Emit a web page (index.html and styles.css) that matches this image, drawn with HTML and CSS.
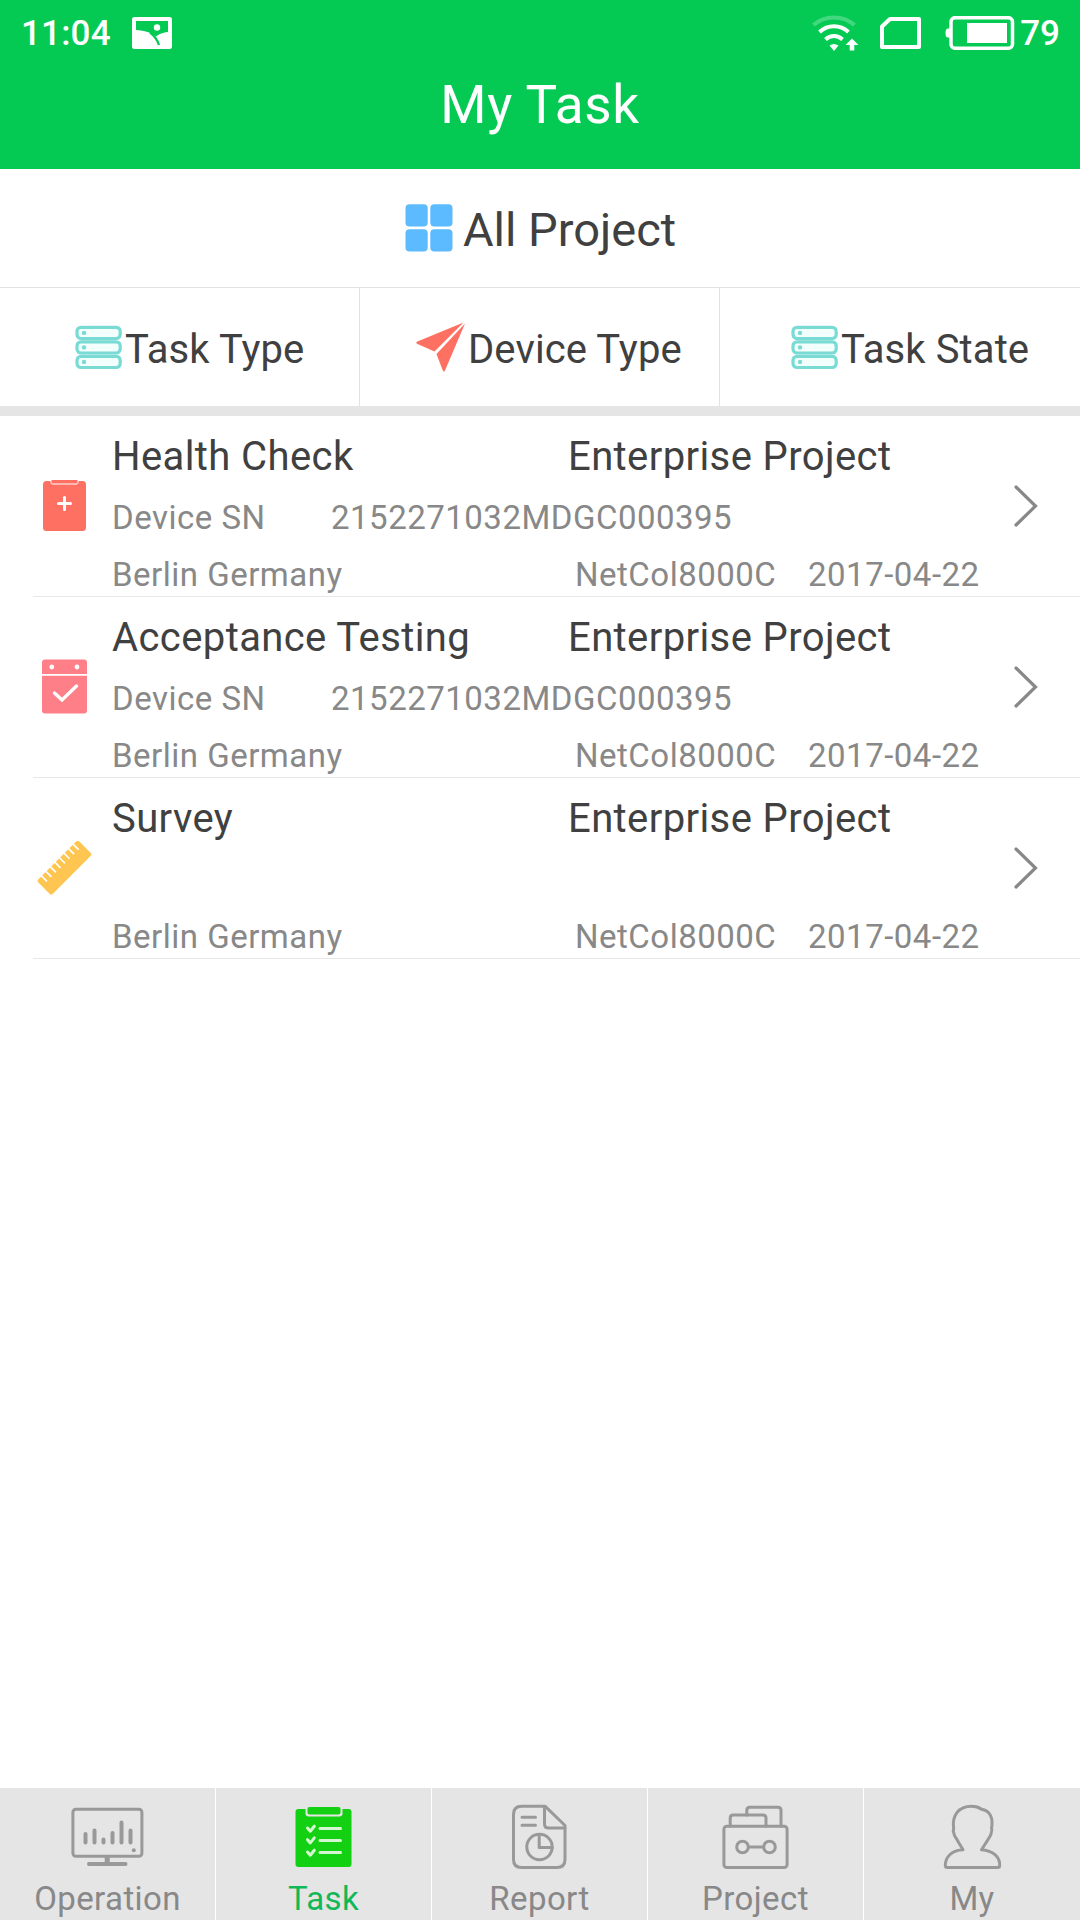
FILE: index.html
```html
<!DOCTYPE html>
<html lang="en">
<head>
  <meta charset="UTF-8">
  <meta name="viewport" content="width=device-width, initial-scale=1.0">
  <title>My Task</title>
  <link rel="stylesheet" href="styles.css">
</head>
<body>
  <header>
    <div class="status-bar">
      <span class="clock">11:04</span>
      <svg class="picture" width="40" height="32" viewBox="0 0 40 32">
        <rect width="40" height="32" rx="2.500" fill="#fff"/>
        <path d="M4 4h32v11c-5 .5-9 1.800-12 4.500C19 15.500 13 13.500 4 13z" fill="#04ca54"/>
        <path d="M18 15.500C22 18.500 25.500 23 27 28" fill="none" stroke="#04ca54" stroke-width="2.200"/>
        <circle cx="25" cy="10.500" r="3.200" fill="#fff"/>
      </svg>
      <div class="status-right">
        <svg width="48" height="40" viewBox="0 0 48 40">
          <g fill="none" stroke="#fff" stroke-width="4">
            <path d="M1.500 12C13 2 31 2 42.500 12" stroke-width="4" opacity="0.25"/>
            <path d="M7.500 19C16 11.300 28 11.300 36.500 19"/>
            <path d="M13.500 26.500C18.500 21.800 25.500 21.800 30.500 26.500"/>
          </g>
          <path d="M17.500 32.500Q22 29.500 26.500 32.500L22 38z" fill="#fff"/>
          <path d="M40 25.500L46.500 32H42.300V37.500H37.700V32H33.500z" fill="#fff"/>
        </svg>
        <svg class="sim" width="42" height="32" viewBox="0 0 42 32">
          <path d="M10 2H39V30H2V9.500z" fill="none" stroke="#fff" stroke-width="4" stroke-linejoin="round"/>
        </svg>
        <svg class="battery" width="70" height="34" viewBox="0 0 70 34">
          <path d="M5 12.500H3Q.5 12.500 .5 17T3 21.500H5z" fill="#fff"/>
          <rect x="6" y="1.700" width="61.500" height="30.600" rx="4" fill="none" stroke="#fff" stroke-width="3.500"/>
          <rect x="22" y="7" width="40" height="20" fill="#fff"/>
        </svg>
        <span class="percent">79</span>
      </div>
    </div>
    <h1>My Task</h1>
  </header>

  <main>
    <div class="all-project">
      <svg width="48" height="48" viewBox="0 0 48 48" fill="#5cbaff">
        <rect x="0.500" y="0.300" width="22.200" height="22.200" rx="4"/>
        <rect x="25.300" y="0.300" width="22.200" height="22.200" rx="4"/>
        <rect x="0.500" y="25.300" width="22.200" height="22.200" rx="4"/>
        <rect x="25.300" y="25.300" width="22.200" height="22.200" rx="4"/>
      </svg>
      <span>All Project</span>
    </div>

    <div class="filters">
      <div class="filter task-type">
        <svg width="50" height="50" viewBox="0 0 50 50">
          <g fill="#f2fffd" stroke="#7adad4" stroke-width="3.200">
            <rect x="3" y="5.300" width="43.200" height="11.200" rx="4"/>
            <rect x="3" y="19.800" width="43.200" height="11.200" rx="4"/>
            <rect x="3" y="34.300" width="43.200" height="11.200" rx="4"/>
          </g>
          <g fill="#7adad4">
            <circle cx="10" cy="10.900" r="2.200"/>
            <circle cx="10" cy="25.400" r="2.200"/>
            <circle cx="10" cy="39.900" r="2.200"/>
          </g>
        </svg>
        <span>Task Type</span>
      </div>
      <div class="filter device-type">
        <svg width="50" height="50" viewBox="0 0 50 50" fill="#fd7062">
          <path d="M48.500 0.500L1.800 19.800Q.5 20.800 2 21.700L19.500 29.500z"/>
          <path d="M50 1.500L21.500 32L27.800 48.500Q29 50.500 30 48.500z"/>
        </svg>
        <span>Device Type</span>
      </div>
      <div class="filter task-state">
        <svg width="50" height="50" viewBox="0 0 50 50">
          <g fill="#f2fffd" stroke="#7adad4" stroke-width="3.200">
            <rect x="3" y="5.300" width="43.200" height="11.200" rx="4"/>
            <rect x="3" y="19.800" width="43.200" height="11.200" rx="4"/>
            <rect x="3" y="34.300" width="43.200" height="11.200" rx="4"/>
          </g>
          <g fill="#7adad4">
            <circle cx="10" cy="10.900" r="2.200"/>
            <circle cx="10" cy="25.400" r="2.200"/>
            <circle cx="10" cy="39.900" r="2.200"/>
          </g>
        </svg>
        <span>Task State</span>
      </div>
    </div>

    <ul class="tasks">
      <li>
        <svg class="task-icon" width="58" height="58" viewBox="0 0 58 58">
          <rect x="7" y="4" width="43" height="50" rx="3.500" fill="#fd7062"/>
          <path d="M15 3v2.500q0 1.500 1.500 1.500h24q1.500 0 1.500-1.500V3" fill="#fd7062" stroke="#fff" stroke-width="1"/>
          <path d="M28.500 20.500v12M22.500 26.500h12" stroke="#fff" stroke-width="3" stroke-linecap="round"/>
        </svg>
        <div class="info">
          <div class="line title"><span class="name">Health Check</span><span>Enterprise Project</span></div>
          <div class="line"><span class="label">Device SN</span><span>2152271032MDGC000395</span></div>
          <div class="line"><span class="place">Berlin Germany</span><span class="model">NetCol8000C</span><span>2017-04-22</span></div>
        </div>
        <svg class="arrow" width="26" height="44" viewBox="0 0 26 44">
          <path d="M3 3L22.500 22L3 41" fill="none" stroke="#888" stroke-width="3.200" stroke-linecap="round"/>
        </svg>
      </li>
      <li>
        <svg class="task-icon" width="58" height="58" viewBox="0 0 58 58">
          <rect x="6" y="1.500" width="45" height="54" rx="3" fill="#ff7f89"/>
          <path d="M6 16.800h45" stroke="#fff" stroke-width="1.800"/>
          <circle cx="15.800" cy="9" r="2.400" fill="#fff"/>
          <circle cx="41" cy="9" r="2.400" fill="#fff"/>
          <path d="M18.500 35L26 42L40.500 28" fill="none" stroke="#fff" stroke-width="3.400" stroke-linecap="round"/>
        </svg>
        <div class="info">
          <div class="line title"><span class="name">Acceptance Testing</span><span>Enterprise Project</span></div>
          <div class="line"><span class="label">Device SN</span><span>2152271032MDGC000395</span></div>
          <div class="line"><span class="place">Berlin Germany</span><span class="model">NetCol8000C</span><span>2017-04-22</span></div>
        </div>
        <svg class="arrow" width="26" height="44" viewBox="0 0 26 44">
          <path d="M3 3L22.500 22L3 41" fill="none" stroke="#888" stroke-width="3.200" stroke-linecap="round"/>
        </svg>
      </li>
      <li>
        <svg class="task-icon" width="58" height="58" viewBox="0 0 58 58">
          <g transform="rotate(-45 29 28.500)">
            <rect x="-0.500" y="18" width="58" height="20.500" rx="2" fill="#fec650"/>
            <path d="M6.500 17v8.500M12.800 17v8.500M19.200 17v8.500M25.600 17v8.500M32 17v8.500M38.400 17v8.500M44.800 17v8.500M51.200 17v8.500" stroke="#fff" stroke-width="1.700"/>
          </g>
        </svg>
        <div class="info">
          <div class="line title"><span class="name">Survey</span><span>Enterprise Project</span></div>
          <div class="line"></div>
          <div class="line"><span class="place">Berlin Germany</span><span class="model">NetCol8000C</span><span>2017-04-22</span></div>
        </div>
        <svg class="arrow" width="26" height="44" viewBox="0 0 26 44">
          <path d="M3 3L22.500 22L3 41" fill="none" stroke="#888" stroke-width="3.200" stroke-linecap="round"/>
        </svg>
      </li>
    </ul>
  </main>

  <nav>
    <a>
      <svg width="80" height="68" viewBox="0 0 80 68">
        <rect x="4.900" y="6.300" width="69" height="47" rx="3"/>
        <path d="M17.500 31v8.500M26.500 27.500v12M35.500 36.500v3M44.500 30v9.500M53.500 19.500v20M62.500 27.500v12" stroke-width="4"/>
        <path d="M39.200 54.500v6" stroke-width="5"/>
        <path d="M21 61h36.500" stroke-width="4"/>
        <circle class="solid" cx="65.800" cy="47.200" r="2"/>
      </svg>
      <span>Operation</span>
    </a>
    <a class="active">
      <svg width="80" height="68" viewBox="0 0 80 68">
        <rect class="board" x="11.500" y="6" width="56" height="58" rx="3"/>
        <path class="gap" d="M21.500 5v5.500q0 3 3 3h31q3 0 3-3V5z"/>
        <rect class="board" x="23.500" y="4" width="33" height="7.500" rx="2"/>
        <path class="marks" d="M23.500 25l2.800 3.200 4-5M23.500 36.700l2.800 3.200 4-5M23.500 49l2.800 3.200 4-5M36 25.500h20.500M36 37.500h20.500M36 49.500h20.500"/>
      </svg>
      <span>Task</span>
    </a>
    <a>
      <svg width="80" height="68" viewBox="0 0 80 68">
        <path d="M45 3.200H21.500q-8 0-8 8V56.500q0 8 8 8H57q8 0 8-8V22.500z"/>
        <path d="M44.500 3.500V21q0 4 4 4H65"/>
        <path d="M22 14.300h13.500M22 22.300h13.500"/>
        <circle cx="39.500" cy="44" r="12.700"/>
        <path d="M39.200 31.500v13h13"/>
      </svg>
      <span>Report</span>
    </a>
    <a>
      <svg width="80" height="68" viewBox="0 0 80 68">
        <rect x="7.900" y="23.300" width="63.200" height="41.200" rx="3"/>
        <path d="M14.200 23V15q0-3 3-3H47q3 0 3 3v8"/>
        <path d="M30.800 12V7.200q0-3 3-3H62q3 0 3 3V23"/>
        <circle cx="26.500" cy="44" r="5.800"/>
        <circle cx="53.500" cy="44" r="5.800"/>
        <path d="M32.500 44h15"/>
      </svg>
      <span>Project</span>
    </a>
    <a>
      <svg width="80" height="68" viewBox="0 0 80 68">
        <path d="M31 46.700L26 38.500C25 36 21.800 33 21.700 29.500Q20.800 27.500 21.700 26C19.500 12 27 3.200 39.500 3.200Q45.500 3.200 49.500 6.200C58 7.500 61.500 15 59.500 25.500Q60.500 27.500 59.300 29.500C59.200 33 56 36 54.800 38.500L49.500 46.700C61 47.500 68 54 67.700 62.500Q67.700 64.500 65.500 64.500H15.500Q13.300 64.500 13.300 62.500C13.300 54 20 47 31 46.700z"/>
      </svg>
      <span>My</span>
    </a>
  </nav>
</body>
</html>
```
FILE: styles.css
```css
* {
  box-sizing: border-box;
}
body {
  font-family: Roboto, Arial, sans-serif;
  background: #fff;
  color: #404040;
  margin: 0;
  height: 1920px;
  display: flex;
  flex-direction: column;
}
svg {
  display: block;
  flex: none;
}
header {
  background: #04ca54;
  color: white;
  height: 169px;
}
.status-bar {
  display: flex;
  align-items: center;
  height: 66px;
  padding: 0 20px 0 21px;
  font-size: 35px;
  font-weight: 500;
}
.clock {
  width: 111px;
  letter-spacing: 0.2px;
}
.status-right {
  display: flex;
  align-items: center;
  margin-left: auto;
}
.sim {
  margin-left: 20px;
}
.battery {
  margin-left: 23px;
}
.percent {
  margin-left: 5px;
}
h1 {
  margin: 0;
  font-size: 53px;
  font-weight: 400;
  line-height: 78px;
  letter-spacing: 0.6px;
  text-align: center;
}
main {
  flex: 1;
}
.all-project {
  display: flex;
  align-items: center;
  justify-content: center;
  gap: 10px;
  height: 119px;
  padding-left: 1px;
  border-bottom: 1px solid #e2e2e2;
  font-size: 47px;
}
.all-project span {
  padding-top: 2px;
}
.filters {
  display: flex;
  height: 128px;
  border-bottom: 10px solid #e5e5e5;
  font-size: 40px;
  letter-spacing: 0.1px;
}
.filter {
  display: flex;
  align-items: center;
  gap: 1px;
  width: 360px;
  border-right: 1px solid #e2e2e2;
}
.filter span {
  padding-top: 4px;
}
.filter:last-child {
  border-right: none;
}
.task-type {
  padding-left: 74px;
}
.device-type {
  gap: 3px;
  padding-left: 55px;
}
.task-state {
  padding-left: 70px;
}
.tasks {
  list-style: none;
  margin: 0;
  padding: 0 0 0 33px;
}
.tasks li {
  display: flex;
  align-items: center;
  height: 181px;
  border-bottom: 1px solid #e8e8e8;
}
.task-icon {
  margin-left: 3px;
}
.info {
  display: flex;
  flex-direction: column;
  gap: 17px;
  width: 902px;
  padding: 16px 0 0 18px;
}
.line {
  display: flex;
  height: 40px;
  line-height: 40px;
  font-size: 33px;
  letter-spacing: 0.5px;
  color: #888;
  white-space: nowrap;
}
.title {
  height: 48px;
  line-height: 48px;
  font-size: 40px;
  letter-spacing: 0.4px;
  color: #404040;
}
.name {
  width: 456px;
}
.label {
  width: 219px;
}
.place {
  width: 463px;
}
.model {
  width: 233px;
}
.arrow {
  margin-left: 17px;
}
nav {
  display: flex;
  height: 132px;
  background: #e5e5e5;
}
nav a {
  display: flex;
  flex-direction: column;
  align-items: center;
  width: 216px;
  padding-top: 15px;
  border-right: 1px solid #fff;
  color: #888;
  font-size: 33px;
  line-height: 40px;
  letter-spacing: 0.4px;
}
nav a:last-child {
  border-right: none;
}
nav svg {
  margin-bottom: 8px;
  fill: none;
  stroke: #999;
  stroke-width: 3;
  stroke-linecap: round;
  stroke-linejoin: round;
}
nav .solid {
  fill: #999;
  stroke: none;
}
nav .active {
  color: #10b858;
}
nav .board {
  fill: #14d012;
  stroke: none;
}
nav .gap {
  fill: #e5e5e5;
  stroke: none;
}
nav .marks {
  stroke: #d4f7d2;
}
```
